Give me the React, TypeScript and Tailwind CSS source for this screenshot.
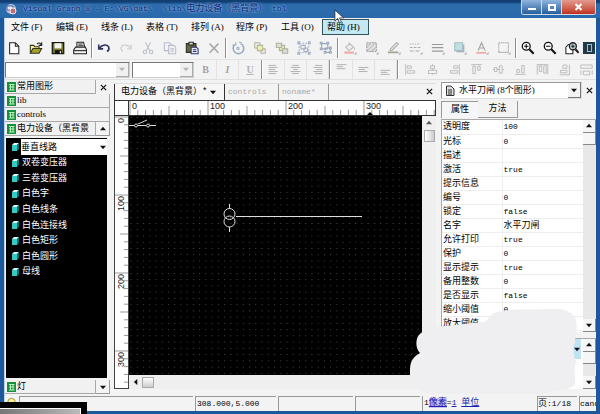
import React from "react";

type Kids = { children?: React.ReactNode };

const serif = "font-['Liberation_Serif','Noto_Sans_CJK_SC',serif]";
const mono = "font-['Liberation_Mono','Noto_Sans_CJK_SC',monospace]";

function Glyph({ children }: Kids) {
  return (
    <svg viewBox="0 0 16 16" className="h-[14px] w-[14px]" fill="none" stroke="currentColor" strokeWidth="1.2" aria-hidden="true">
      {children}
    </svg>
  );
}

const corner = <path d="M15.500 12.500v3h-3z" fill="#aaa" stroke="none" />;

const fileTools: [string, React.ReactNode][] = [
  ["新建", <path d="M3 2h6.500l4 4v8.500H3zM9.500 2v4h4" fill="#fff" stroke="#222" />],
  ["打开", <><path d="M1.500 13.500V5h4l1 1.500h5v2" fill="#f5ee9a" stroke="#333317" /><path d="M1.500 14 4.500 8.500h10L11.500 14z" fill="#a8a02c" stroke="#333317" /><path d="M9 3.500c2-2 3.500-1.500 5 .5M14.500 1.500V5H11" stroke="#222" /></>],
  ["保存", <><path d="M1.500 2h13v12.500h-13z" fill="#77772b" stroke="#1a1a12" strokeWidth="1.500" /><path d="M4 2.500h8v6H4z" fill="#f3f3ee" stroke="none" /><path d="M4.500 10.500h8v4h-8z" fill="#111" stroke="none" /><path d="M10 11.500h1.500v2.500H10z" fill="#eee" stroke="none" /></>],
  ["打印", <g stroke="#222"><path d="M4.500 7V1.500H12L13.500 7" fill="#fff" /><path d="M6 3.500h5M6 5.500h6" /><path d="M.8 10 3 7h11l1.500 3v4.500H.8z" fill="#eee" /><path d="M1 11h14.500" /></g>],
];

const editTools: [string, React.ReactNode][] = [
  ["撤销", <path d="M2 4v5h5M2.500 8.500C6 3.500 12 3.500 13.500 7c.8 2.500-.5 4-2 5" stroke="#2e3464" strokeWidth="1.800" />],
  ["重做", <path d="M14 4v5H9M13.500 8.500C10 3.500 4 3.500 2.500 7c-.8 2.500.5 4 2 5" stroke="#cfd3da" strokeWidth="1.500" />],
  ["剪切", <g stroke="#b9bdc9"><path d="M5 1.500 10 11M11 1.500 6 11" /><circle cx="4.500" cy="12.500" r="2" /><circle cx="11.500" cy="12.500" r="2" /></g>],
  ["复制", <g stroke="#b6bbcc" fill="#f2f2f5"><path d="M1.500 2h6l2 2v7h-8z" /><path d="M6.500 5h6l2 2v7.500h-8z" /><path d="M8.500 9h4M8.500 11.500h4" /></g>],
  ["粘贴", <><path d="M1.500 3h11v10h-11z" fill="#6c6a32" stroke="#2b2b20" /><path d="M4.500 1.500h5v3h-5z" fill="#ddd" stroke="#222" /><path d="M7 7h6l2 2v5.500H7z" fill="#e8ebff" stroke="#30366e" /><path d="M9 10h4M9 12h4" stroke="#30366e" /></>],
  ["删除", <path d="M3 3l10 10.500M13 3 3 13.500" stroke="#a7a7a7" strokeWidth="1.700" />],
];

const groupTools: [string, React.ReactNode][] = [
  ["旋转", <><path d="M4 4.500a6 6 0 1 0 7-1.500" stroke="#96a9c4" strokeWidth="1.800" /><path d="M1.500 4.500h4V1M12 2 9 1" stroke="#96a9c4" /><circle cx="8" cy="8.500" r="1.200" stroke="#96a9c4" /></>],
  ["置前", <g stroke="#b3b59a"><path d="M2 2h6v6H2zM9 9h5v5H9z" fill="#eee" /><path d="M5 5h6v6H5z" fill="#f0efa9" /></g>],
  ["置后", <g stroke="#afb19c"><path d="M5 5h6v6H5z" fill="#e8e7a5" /><path d="M1.500 2.500h6v5h-6zM8.500 9h6v5h-6z" fill="#ddd" /></g>],
  ["组合", <g stroke="#a5aec4"><path d="M2.500 2.500h11v11h-11z" strokeDasharray="2 1.500" /><path d="M4.500 5h5v4h-5zM8 8h4v4H8z" /><path d="M1 1h2v2H1zM13 1h2v2h-2zM1 13h2v2H1zM13 13h2v2h-2z" /></g>],
  ["取消组合", <g stroke="#9ca6bc"><path d="M3 3h7v6H3zM7 8h6v5H7z" /><path d="M1.500 1.500h2v2h-2zM9 1.500h2v2H9zM1.500 8h2v2h-2zM12 7h2v2h-2zM12 12h2v2h-2zM6 12h2v2H6z" fill="#e2e6ee" /></g>],
];

const styleTools: [string, React.ReactNode][] = [
  ["填充色", <><path d="m3 7 5-4 4 4-5 4z" fill="#ececec" stroke="#bbb" /><path d="M7 5V1.500M12 7c1.500 1 1.500 2 1.500 3" stroke="#bbb" /><path d="M1.500 12h11v2.500h-11z" fill="#efaaa5" stroke="none" />{corner}</>],
  ["图案", <><path d="M2 2h11v10H2z" fill="#e0e0e0" stroke="#999" strokeDasharray="2 1" /><path d="m2 7 5-5M2 12 12 2M7 12l6-5" stroke="#bbb" />{corner}</>],
  ["线条色", <><path d="m4 9 7-7 2 1.500-7 7-2.500.5z" fill="#eee" stroke="#aaa" /><path d="M1 12h12v2H1z" fill="#a3a38e" stroke="none" />{corner}</>],
  ["线型", <><path d="M1 3.500h12" strokeDasharray="1 1" stroke="#aaa" /><path d="M1 7.500h12" strokeDasharray="3 1.500" stroke="#aaa" /><path d="M1 11.500h12" strokeDasharray="4 1 1 1" stroke="#aaa" />{corner}</>],
  ["线宽", <><path d="M1 4h13M1 7.500h13M1 11.500h13" stroke="#999" strokeWidth="1.300" />{corner}</>],
  ["阴影", <><path d="M4 4h9v9H4z" fill="#a6b3b5" stroke="none" /><path d="M2 2h9v9H2z" fill="#bfe0e2" stroke="#a5bdc0" />{corner}</>],
  ["文字颜色", <><path d="M3.500 11 7.500 2l4 9M5 8h5" stroke="#a5a5a5" strokeWidth="1.400" /><path d="M1.500 12.500h11v2h-11z" fill="#efaaa5" stroke="none" />{corner}</>],
  ["边框", <><path d="M2 2h11v11H2z" stroke="#a5a5a5" strokeDasharray="1.500 .7" />{corner}</>],
];

const zoomTools: [string, React.ReactNode][] = [
  ["放大", <g stroke="#111"><circle cx="6" cy="6" r="4.500" strokeWidth="1.500" fill="#fff" /><path d="M3.500 6h5M6 3.500v5" /><path d="m9.500 9.500 5 5" strokeWidth="2.400" /></g>],
  ["缩小", <g stroke="#111"><circle cx="6" cy="6" r="4.500" strokeWidth="1.500" fill="#fff" /><path d="M3.500 6h5" /><path d="m9.500 9.500 5 5" strokeWidth="2.400" /></g>],
  ["适合页面", <g stroke="#222"><path d="M1 14.500V7l3-3h5v10.500z" fill="#fff" /><circle cx="9" cy="6" r="4" strokeWidth="1.500" fill="#b9cdd0" /><path d="M7 6h4M9 4v4" /><path d="m12 9.500 3.500 4" strokeWidth="2.400" /></g>],
];

const alignPaths: [string, string][] = [
  ["左对齐", "M2 3h9M2 5.500h11M2 8h8M2 10.500h11M2 13h9"],
  ["居中", "M4 3h8M2 5.500h12M5 8h6M2 10.500h12M4 13h8"],
  ["右对齐", "M5 3h9M3 5.500h11M6 8h8M3 10.500h11M5 13h9"],
];
const vertPaths: [string, string][] = [
  ["顶端", "M2 2h12M2 4.500h8M2 7h11"],
  ["中部", "M2 5.500h12M2 8h8M2 10.500h11"],
  ["底端", "M2 9h12M2 11.500h8M2 14h11"],
];
const arrangePaths: [string, string][] = [
  ["对齐左边", "M2 1.500v13M4 3.500h5v3H4zM4 9.500h9v3H4z"],
  ["对齐中心", "M8 1.500v2M8 7v2M8 13v1.500M5.500 3.500h5V7h-5zM3 9h10v4H3z"],
  ["对齐右边", "M14 1.500v13M7 3.500h5v3H7zM3 9.500h9v3H3z"],
  ["对齐顶边", "M1.500 2h13M3.500 4h3v9h-3zM9.500 4h3v5h-3z"],
  ["对齐中线", "M1 8h2M6 8h3M12.500 8H15M3 5.500h3v5H3zM9 3.500h3.500v9H9z"],
  ["对齐底边", "M1.500 14h13M3.500 8h3v4h-3zM9.500 3h3v9h-3z"],
  ["水平等距", "M1.500 2v12M14.500 2v12M4 3.500h3v7H4zM9.500 3.500h3v9h-3zM1.500 2h13"],
  ["垂直等距", "M2 14.500h12M14 2v12.500M6 2.500h5v4H6zM3 9h8v3H3z"],
  ["等宽", "M1 2.500h14v4H1zM4 10h8v4.500H4zM1 9v5.500M15 9v5.500"],
];

function Tool({ label, children, edge }: Kids & { label: string; edge?: boolean }) {
  return (
    <button
      aria-label={label}
      className={
        edge
          ? "flex h-[20px] w-[22px] shrink-0 items-center justify-center border-r border-[#e2e2e2] text-[#a2a2a2]"
          : "flex h-[20px] w-[22px] shrink-0 items-center justify-center text-[#b2b2b2]"
      }
    >
      {children}
    </button>
  );
}

function Tools({ items }: { items: [string, React.ReactNode][] }) {
  return (
    <>
      {items.map(([label, art]) => (
        <Tool key={label} label={label}>
          <Glyph>{art}</Glyph>
        </Tool>
      ))}
    </>
  );
}

function PathTools({ items, edge }: { items: [string, string][]; edge?: boolean }) {
  return (
    <>
      {items.map(([label, d]) => (
        <Tool key={label} label={label} edge={edge}>
          <svg viewBox="0 0 16 16" className="h-[13px] w-[13px]" fill="none" stroke="currentColor" aria-hidden="true">
            <path d={d} />
          </svg>
        </Tool>
      ))}
    </>
  );
}

function Divider() {
  return <span className="h-[20px] w-[2px] shrink-0 border-l border-[#8d8d8d] bg-white" />;
}

function Arrow({ dir, tone = "#111" }: { dir: "up" | "down" | "left"; tone?: string }) {
  const d = { up: "M0 5h7L3.500 1z", down: "M0 2h7L3.500 6z", left: "M5 0v7L1 3.500z" }[dir];
  return (
    <svg viewBox="0 0 7 7" className="h-[6px] w-[6px] shrink-0" aria-hidden="true">
      <path d={d} fill={tone} />
    </svg>
  );
}

function Close({ label }: { label: string }) {
  return (
    <button aria-label={label} className="flex h-[14px] w-[14px] shrink-0 items-center justify-center">
      <svg viewBox="0 0 8 8" className="h-[7px] w-[7px]" stroke="#111" strokeWidth="1.400" aria-hidden="true">
        <path d="m1 1 6 6M7 1 1 7" />
      </svg>
    </button>
  );
}

function EmptyCombo({ label, width }: { label: string; width: string }) {
  return (
    <div className={`relative h-[16px] shrink-0 border border-[#d0d0d0] border-t-[#777] border-l-[#777] bg-white ${width}`}>
      <select aria-label={label} className="h-full w-full appearance-none bg-transparent text-[9px]" />
      <span className="pointer-events-none absolute inset-y-0 right-0 flex w-[13px] items-center justify-center border-r border-b border-[#aaa] bg-[#f1f1f1]">
        <Arrow dir="down" tone="#b5b5b5" />
      </span>
    </div>
  );
}

function SheetIcon() {
  return (
    <svg viewBox="0 0 9 10" className="h-[10px] w-[9px] shrink-0" aria-hidden="true">
      <path d="M0 0h9v10H0z" fill="#168f3a" />
      <path d="M2 2.500h5.500M2 5h5.500M2 8h5.500M3.500 2v6M6 2v6" stroke="#b7f5bd" fill="none" />
    </svg>
  );
}

function PaletteHeader({ name, arrow }: { name: string; arrow?: "up" | "down" }) {
  return (
    <div className="flex h-[14px] items-stretch">
      <button className="flex min-w-0 flex-1 items-center gap-px border-r border-b border-[#a9a9a9] bg-[#f1f1f1] pl-[2px] whitespace-nowrap">
        <SheetIcon />
        <span className="leading-[13px]">{name}</span>
      </button>
      {arrow && (
        <button aria-label="滚动" className="flex w-[14px] items-center justify-center border-r border-b border-[#999] bg-[#f4f4f4]">
          <Arrow dir={arrow} />
        </button>
      )}
    </div>
  );
}

function Cube() {
  return (
    <svg viewBox="0 0 9 9" className="h-[9px] w-[9px] shrink-0" aria-hidden="true">
      <path d="M1 3h5v6H1z" fill="#35c9c4" />
      <path d="m1 3 2-2h5L6 3z" fill="#d9ffff" />
      <path d="m6 3 2-2v6L6 9z" fill="#11706f" />
    </svg>
  );
}

const shapes = ["双卷变压器", "三卷变压器", "白色字", "白色线条", "白色连接线", "白色矩形", "白色圆形", "母线"];

function Palette() {
  return (
    <aside className="flex w-[105px] shrink-0 flex-col text-[9px]">
      <div className="flex">
        <div className="min-w-0 flex-1">
          <PaletteHeader name="常用图形" />
        </div>
        <Close label="关闭图形库" />
      </div>
      <PaletteHeader name="lib" />
      <PaletteHeader name="controls" />
      <PaletteHeader name="电力设备（黑背景" arrow="up" />
      <div className="mt-[2px] mr-[3px] ml-px min-h-0 flex-1 bg-black pt-px text-white">
        <ul className="grid h-[140px] grid-rows-9">
          <li className="flex items-center pl-[5px]">
            <Cube />
            <div className="relative ml-px h-full flex-1">
              <select aria-label="图形" className="h-full w-full appearance-none bg-white text-[9px] leading-[14px] text-black">
                <option>垂直线路</option>
              </select>
              <span className="pointer-events-none absolute inset-y-0 right-px flex items-center">
                <Arrow dir="down" />
              </span>
            </div>
          </li>
          {shapes.map((s) => (
            <li key={s} className="flex">
              <button className="flex flex-1 items-center gap-[2px] pl-[5px] text-left">
                <Cube />
                <span className="leading-[14px]">{s}</span>
              </button>
            </li>
          ))}
        </ul>
      </div>
      <div className="mt-[2px] mb-[2px]">
        <PaletteHeader name="灯" arrow="down" />
      </div>
    </aside>
  );
}

const steps = Array.from({ length: 200 }, (_, i) => i);

function TopRuler() {
  return (
    <svg className="h-[14px] min-w-0 flex-1" aria-hidden="true">
      {steps.map((i) => (
        <path key={i} d={`M${i * 7.8 + 1} ${i % 10 === 0 ? 0 : i % 5 === 0 ? 5 : 9}V14`} stroke="#999" />
      ))}
      {[0, 100, 200, 300].map((n) => (
        <text key={n} x={n * 0.78 + 3} y="8" className="font-['Liberation_Sans',sans-serif] text-[9px]" fill="#222">
          {n}
        </text>
      ))}
      <path d="M238 14l3-3 3 3z" fill="#000" />
    </svg>
  );
}

function SideRuler() {
  return (
    <svg className="h-full w-[15px] shrink-0 border-r border-b border-l border-[#444] bg-white" aria-hidden="true">
      {steps.map((i) => (
        <path key={i} d={`M${i % 10 === 0 ? 0 : i % 5 === 0 ? 5 : 9} ${i * 7.8 + 1}H15`} stroke="#999" />
      ))}
      {[0, 100, 200, 300].map((n) => (
        <text
          key={n}
          transform={`translate(9 ${n * 0.78 + 2}) rotate(-90)`}
          textAnchor="end"
          className="font-['Liberation_Sans',sans-serif] text-[9px]"
          fill="#222"
        >
          {n}
        </text>
      ))}
    </svg>
  );
}

function Drawing() {
  return (
    <svg className="min-h-0 w-full flex-1 bg-black" fill="none" stroke="#ddd" role="img" aria-label="绘图区">
      <defs>
        <pattern id="grid" width="6.24" height="6.24" patternUnits="userSpaceOnUse" x="1.500" y="1">
          <path d="M0 0h1v1H0z" fill="#4c4c4c" stroke="none" />
        </pattern>
      </defs>
      <rect width="100%" height="100%" fill="url(#grid)" stroke="none" />
      <path d="M0 9.500h5M9 9.500h8M21 9.500h6M9 8l9-4" />
      <circle cx="7" cy="9.500" r="1.500" />
      <circle cx="19" cy="9.500" r="1.500" />
      <circle cx="100.500" cy="98" r="5.500" />
      <circle cx="100.500" cy="105.500" r="5.500" />
      <path d="M100.500 88v5M100.500 111v5M107 100.500h126" />
    </svg>
  );
}

function Editor() {
  return (
    <main className="ml-[4px] flex min-w-0 flex-1 flex-col pt-[3px]">
      <div className={`flex h-[17px] shrink-0 items-stretch border-t border-[#ddd] text-[8px] text-[#aaa] ${mono}`}>
        <button className="flex w-[111px] shrink-0 items-center gap-[3px] border-x border-[#333] bg-[#f6f6f6] pl-[6px] text-[9px] whitespace-nowrap text-black">
          <span className="leading-[13px]">电力设备（黑背景）*</span>
          <Arrow dir="down" />
        </button>
        <button className="w-[54px] shrink-0 border-r border-[#999] pl-[3px] text-left">controls</button>
        <button className="w-[50px] shrink-0 border-r border-[#999] pl-[3px] text-left">noname*</button>
        <span className="flex-1" />
        <Close label="关闭文档" />
      </div>
      <div className="flex h-[16px] shrink-0 border border-[#333] bg-white">
        <span className="w-[14px] shrink-0 border-r border-[#333]" />
        <TopRuler />
      </div>
      <div className="mb-[7px] flex min-h-0 flex-1">
        <SideRuler />
        <div className="flex min-w-0 flex-1 flex-col">
          <Drawing />
          <div className="flex h-[14px] shrink-0 items-center gap-[3px] bg-[#efefef] pl-[4px]">
            <Arrow dir="left" />
            <span className="h-[11px] w-[12px] border border-[#aaa] bg-gradient-to-b from-white to-[#ccc]" />
          </div>
        </div>
        <div className="flex w-[14px] shrink-0 flex-col items-center gap-[4px] bg-[#efefef] pt-[4px]">
          <Arrow dir="up" tone="#555" />
          <span className="h-[12px] w-[11px] border border-[#aaa] bg-gradient-to-r from-white to-[#ccc]" />
        </div>
      </div>
    </main>
  );
}

const props: [string, string][] = [
  ["透明度", "100"],
  ["光标", "0"],
  ["描述", ""],
  ["激活", "true"],
  ["提示信息", ""],
  ["编号", "0"],
  ["锁定", "false"],
  ["名字", "水平刀闸"],
  ["允许打印", "true"],
  ["保护", "0"],
  ["显示提示", "true"],
  ["备用整数", "0"],
  ["是否显示", "false"],
  ["缩小阈值", "0"],
  ["放大阈值", "0"],
];

function Scroll() {
  return (
    <div className="flex w-[13px] shrink-0 flex-col bg-[#e9e8e6]">
      <button aria-label="向上" className="flex h-[13px] items-center justify-center border-r border-b border-[#888] bg-[#f6f6f6]">
        <Arrow dir="up" />
      </button>
      <span className="h-[12px] border-r border-b border-[#888] bg-[#f6f6f6]" />
      <span className="flex-1" />
      <button aria-label="向下" className="flex h-[13px] items-center justify-center border-r border-b border-[#888] bg-[#f6f6f6]">
        <Arrow dir="down" />
      </button>
    </div>
  );
}

function Inspector() {
  return (
    <aside className="ml-[5px] flex w-[155px] shrink-0 flex-col pt-[2px] text-[9px]">
      <div className="flex items-center">
        <div className="relative h-[17px] w-[142px] border border-[#ddd] border-t-[#999] border-l-[#999] bg-white">
          <svg viewBox="0 0 10 11" className="absolute top-[2px] left-[3px] h-[11px] w-[10px]" fill="#ddd" stroke="#333" aria-hidden="true">
            <path d="M1.500 1h4.500l3 3v6.500H1.500zM3 5h4M3 7h4M3 9h4" />
          </svg>
          <select aria-label="对象" className={`h-full w-full appearance-none bg-transparent pl-[17px] text-[9px] ${serif}`}>
            <option>水平刀闸 (8个图形)</option>
          </select>
          <span className="pointer-events-none absolute inset-y-0 right-0 flex w-[13px] items-center justify-center border-r border-b border-[#777] bg-[#f3f3f3]">
            <Arrow dir="down" />
          </span>
        </div>
        <Close label="关闭属性" />
      </div>
      <div role="tablist" className="mt-[2px] flex h-[17px] shrink-0">
        <button role="tab" aria-selected="true" className="w-[37px] border-t border-l border-[#999] bg-[#f6f6f6]">属性</button>
        <button role="tab" aria-selected="false" className="w-[40px] border-r border-b border-[#999]">方法</button>
      </div>
      <div className="mt-px flex min-h-0 flex-1 border-t border-l border-[#aaa] bg-white">
        <div className="min-h-0 min-w-0 flex-1 overflow-hidden">
          <table className="w-full table-fixed border-collapse">
            <tbody>
              {props.map(([k, v]) => (
                <tr key={k} className="h-[14px] border-b border-[#eee]">
                  <th scope="row" className="w-[60px] border-r border-[#eee] p-0 pl-px text-left leading-[13px] font-normal">
                    {k}
                  </th>
                  <td className={`p-0 pl-px leading-[13px] ${v === "水平刀闸" ? "" : `text-[8px] ${mono}`}`}>{v}</td>
                </tr>
              ))}
            </tbody>
          </table>
        </div>
        <Scroll />
      </div>
      <div className="mt-[6px] mb-[7px] flex h-[51px] shrink-0 border-t border-l border-[#aaa] bg-white">
        <div className="flex flex-1 justify-end pr-[2px]">
          <button aria-label="选择" className="flex h-[20px] w-[9px] items-center justify-center bg-[#bfe3f0]">
            <Arrow dir="down" />
          </button>
        </div>
        <Scroll />
      </div>
    </aside>
  );
}

const menus = ["文件 (F)", "编辑 (E)", "线条 (L)", "表格 (T)", "排列 (A)", "程序 (P)", "工具 (O)"];

function TitleBar() {
  return (
    <header className="flex h-[18px] shrink-0 items-center bg-gradient-to-b from-[#123f73] from-10% via-[#2d6cac] via-25% to-[#2a69ab] pl-[5px]">
      <svg viewBox="0 0 12 12" className="h-[12px] w-[12px] shrink-0" aria-hidden="true">
        <circle cx="6" cy="6" r="5" fill="#b8c4df" />
        <path d="M2 3h6v4H2z" fill="#e9eefb" stroke="#415da3" />
        <circle cx="8" cy="8" r="3" fill="#c36a78" stroke="#eee" />
      </svg>
      <h1 className={`ml-[6px] flex-1 overflow-hidden text-[8px] leading-[14px] whitespace-pre text-[#0c1f72] [text-shadow:0_0_2px_#9cc4f0,0_0_3px_#86b2e4] ${mono}`}>
        {"Visual Graph 8 - E:\\VG\\dat\\  \\lib\\"}
        <span className="text-[9px]">电力设备（黑背景）</span>
        {" tbl"}
      </h1>
      <div className="mr-[4px] flex h-[15px] self-start overflow-hidden rounded-b-[3px] border border-t-0 border-[#c9daee]">
        <button aria-label="最小化" className="flex w-[20px] items-end justify-center border-r border-[#c9daee] bg-gradient-to-b from-[#8eb4dc] to-[#265f9e] pb-[4px]">
          <span className="h-[2px] w-[8px] bg-white" />
        </button>
        <button aria-label="最大化" className="flex w-[20px] items-center justify-center border-r border-[#c9daee] bg-gradient-to-b from-[#8eb4dc] to-[#265f9e]">
          <span className="h-[7px] w-[8px] border-2 border-white" />
        </button>
        <button aria-label="关闭" className="flex w-[33px] items-center justify-center bg-gradient-to-b from-[#e39a8d] to-[#c02f1c]">
          <svg viewBox="0 0 8 8" className="h-[8px] w-[9px]" stroke="#fff" strokeWidth="2" aria-hidden="true">
            <path d="m1 1 6 6M7 1 1 7" />
          </svg>
        </button>
      </div>
    </header>
  );
}

export default function App() {
  return (
    <div className={`relative flex h-screen w-full flex-col overflow-hidden bg-[#1d589b] text-black ${serif}`}>
      <TitleBar />
      <div className="mr-[4px] mb-[3px] ml-[4px] flex min-h-0 flex-1 flex-col overflow-hidden border-l border-[#b9d2ea] bg-[#f3f3f3]">
        <nav className="flex h-[18px] shrink-0 items-start pt-px pl-[2px] text-[9px]">
          {menus.map((m) => (
            <button key={m} className="h-[16px] w-[45px] shrink-0 pl-[4px] text-left leading-[14px] whitespace-nowrap">{m}</button>
          ))}
          <button className="h-[16px] w-[47px] shrink-0 border border-[#35525c] bg-[#c3e8f1] pl-[4px] text-left leading-[14px] whitespace-nowrap">
            帮助 (H)
          </button>
        </nav>
        <div role="toolbar" aria-label="标准" className="-ml-[2px] flex h-[23px] shrink-0 items-center">
          <Tools items={fileTools} />
          <Divider />
          <Tools items={editTools} />
          <Divider />
          <Tools items={groupTools} />
          <Divider />
          <Tools items={styleTools} />
          <Divider />
          <Tools items={zoomTools} />
          <button aria-label="全屏" className="h-[12px] w-[12px] shrink-0 bg-[#223a48] p-[2px]">
            <span className="mx-auto block h-[8px] w-[5px] border border-[#9fc0cf]" />
          </button>
        </div>
        <div role="toolbar" aria-label="格式" className="flex h-[20px] shrink-0 items-center border-t border-[#e4e4e4]">
          <EmptyCombo label="字体" width="w-[125px]" />
          <span className="w-[2px] shrink-0" />
          <EmptyCombo label="字号" width="w-[62px]" />
          <span className="w-px shrink-0" />
          <Tool label="粗体" edge><b className="text-[10px]">B</b></Tool>
          <Tool label="斜体" edge><b className="text-[10px] italic">I</b></Tool>
          <Tool label="下划线"><b className="text-[10px] underline">U</b></Tool>
          <Divider />
          <PathTools items={alignPaths} edge />
          <Divider />
          <PathTools items={vertPaths} edge />
          <Divider />
          <PathTools items={arrangePaths} />
        </div>
        <div className="flex min-h-0 flex-1 border-t border-[#e0e0e0]">
          <Palette />
          <Editor />
          <Inspector />
        </div>
        <footer className={`flex h-[15px] shrink-0 items-stretch gap-[2px] text-[8px] leading-[13px] whitespace-nowrap ${mono}`}>
          <svg viewBox="0 0 12 12" className="ml-[1px] h-[12px] w-[11px] shrink-0" aria-hidden="true">
            <circle cx="6" cy="6" r="4" fill="#fff29a" stroke="#9a8a32" />
          </svg>
          <span className="w-[174px] shrink-0 border-t border-l border-[#999]" />
          <span className="w-[81px] shrink-0 border-t border-l border-[#999] pl-px">308.000,5.000</span>
          <span className="w-[75px] shrink-0 border-t border-l border-[#999]" />
          <span className="min-w-0 flex-1 border-t border-l border-[#999]" />
          <span className="w-[113px] shrink-0 border-l border-[#999] pl-px">
            1<a href="#pixel" className="bg-[#c8c0ee] text-[9px] text-[#2020b0] underline">像素</a>=<a href="#scale" className="text-[#2020b0] underline">1</a>{" "}
            <a href="#unit" className="text-[9px] text-[#2020b0] underline">单位</a>
          </span>
          <span className="w-[40px] shrink-0 border-t border-l border-[#999]"><span className="text-[9px]">页</span>:1/18</span>
          <span className="w-[17px] shrink-0 overflow-hidden border-t border-l border-[#999]">cann</span>
        </footer>
      </div>

      <svg viewBox="400 300 200 114" className="pointer-events-none absolute right-0 bottom-0 h-[114px] w-[200px]" aria-hidden="true">
        <path
          d="M420 353C415 348 415 337 421 333C427 328 436 327 445 326L483 322C489 321 488 315 497 312C515 308 533 310 550 309C563 308 573 311 576 320C578 329 575 336 575 342C572 350 574 356 576 362C573 374 577 382 574 386C566 391 553 389 545 394H432C418 392 409 387 410 376C410 367 409 359 420 353Z"
          fill="#efeff1"
        />
      </svg>
      <div className="absolute bottom-0 left-0 h-[12px] w-[87px] bg-black pt-[6px]" aria-hidden="true">
        <div className="h-full w-[81px] border-t border-r border-white bg-gradient-to-r from-[#777] to-[#bbb]" />
      </div>
      <svg viewBox="0 0 12 16" className="pointer-events-none absolute top-[9px] left-[334px] h-[15px] w-[11px]" aria-hidden="true">
        <path d="M1 1v12l3-3 2 5 2-1-2-4.500h4.500z" fill="#fff" stroke="#222" strokeWidth=".8" />
      </svg>
    </div>
  );
}
